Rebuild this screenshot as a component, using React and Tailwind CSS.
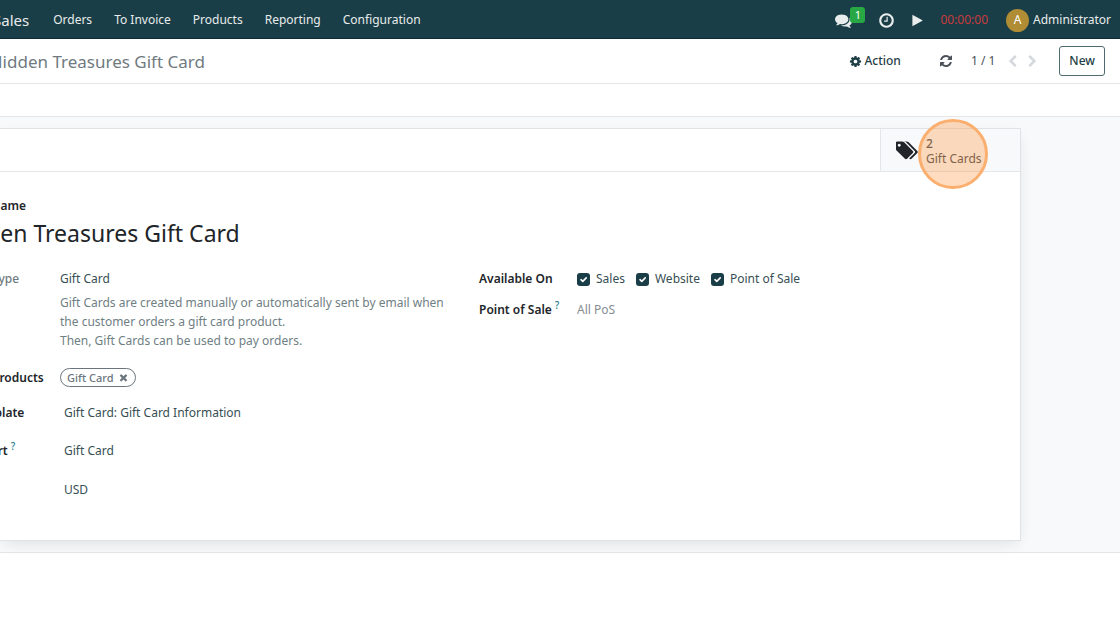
import React from 'react'

const icons = {
  comments:
    'M1408 768q0 139-94 257t-256.5 186.5-353.5 68.5q-86 0-176-16-124 88-278 128-36 9-86 16h-3q-11 0-20.5-8t-11.5-21q-1-3-1-6.5t.5-6.5 2-6l2.5-5 3.5-5.5 4-5 4.5-5 4-4.5q5-6 23-25t26-29.5 22.5-29 25-38.5 20.5-44q-124-72-195-177t-71-224q0-139 94-257t256.5-186.5 353.5-68.5 353.5 68.5 256.5 186.5 94 257zm384 256q0 120-71 224.5t-195 176.5q10 24 20.5 44t25 38.5 22.5 29 26 29.5 23 25q1 1 4 4.5t4.5 5 4 5 3.5 5.5l2.5 5 2 6 .5 6.5-1 6.5q-3 14-13 22t-22 7q-50-7-86-16-154-40-278-128-90 16-176 16-271 0-472-132 58 4 88 4 161 0 309-45t264-129q125-92 192-212t67-254q0-77-23-152 129 71 204 178t75 230z',
  clock:
    'M1024 544v448q0 14-9 23t-23 9h-320q-14 0-23-9t-9-23v-64q0-14 9-23t23-9h224v-352q0-14 9-23t23-9h64q14 0 23 9t9 23zm416 352q0-148-73-273t-198-198-273-73-273 73-198 198-73 273 73 273 198 198 273 73 273-73 198-198 73-273zm224 0q0 209-103 385.5t-279.5 279.5-385.5 103-385.5-103-279.5-279.5-103-385.5 103-385.5 279.5-279.5 385.5-103 385.5 103 279.5 279.5 103 385.5z',
  play: 'M1576 927l-1328 738q-23 13-39.5 3t-16.5-36v-1472q0-26 16.5-36t39.5 3l1328 738q23 13 23 31t-23 31z',
  cog:
    'M1152 896q0-106-75-181t-181-75-181 75-75 181 75 181 181 75 181-75 75-181zm512-109v222q0 12-8 23t-20 13l-185 28q-19 54-39 91 35 50 107 138 10 12 10 25t-9 23q-27 37-99 108t-94 71q-12 0-26-9l-138-108q-44 23-91 38-16 136-29 186-7 28-36 28h-222q-14 0-24.5-8.5t-11.5-21.5l-28-184q-49-16-90-37l-141 107q-10 9-25 9-14 0-25-11-126-114-165-168-7-10-7-23 0-12 8-23 15-21 51-66.5t54-70.5q-27-50-41-99l-183-27q-13-2-21-12.5t-8-23.5v-222q0-12 8-23t19-13l186-28q14-46 39-92-40-57-107-138-10-12-10-24 0-10 9-23 26-36 98.5-107.5t94.5-71.5q13 0 26 10l138 107q44-23 91-38 16-136 29-186 7-28 36-28h222q14 0 24.5 8.5t11.5 21.5l28 184q49 16 90 37l142-107q9-9 24-9 13 0 25 10 129 119 165 170 7 8 7 22 0 12-8 23-15 21-51 66.5t-54 70.5q26 50 41 98l183 28q13 2 21 12.5t8 23.5z',
  refresh:
    'M1639 1056q0 5-1 7-64 268-268 434.5t-478 166.5q-146 0-282.5-55t-243.5-157l-129 129q-19 19-45 19t-45-19-19-45v-448q0-26 19-45t45-19h448q26 0 45 19t19 45-19 45l-137 137q71 66 161 102t187 36q134 0 250-65t186-179q11-17 53-117 8-23 30-23h192q13 0 22.5 9.5t9.5 22.5zm25-800v448q0 26-19 45t-45 19h-448q-26 0-45-19t-19-45 19-45l138-138q-148-137-349-137-134 0-250 65t-186 179q-11 17-53 117-8 23-30 23h-199q-13 0-22.5-9.5t-9.5-22.5v-7q65-268 270-434.5t480-166.5q146 0 284 55.5t245 156.5l130-129q19-19 45-19t45 19 19 45z',
  left: 'M1427 301l-531 531 531 531q19 19 19 45t-19 45l-166 166q-19 19-45 19t-45-19l-742-742q-19-19-19-45t19-45l742-742q19-19 45-19t45 19l166 166q19 19 19 45t-19 45z',
  right: 'M1363 877l-742 742q-19 19-45 19t-45-19l-166-166q-19-19-19-45t19-45l531-531-531-531q-19-19-19-45t19-45l166-166q19-19 45-19t45 19l742 742q19 19 19 45t-19 45z',
  tags:
    'M384 448q0-53-37.5-90.5t-90.5-37.5-90.5 37.5-37.5 90.5 37.5 90.5 90.5 37.5 90.5-37.5 37.5-90.5zm1067 576q0 53-37 90l-491 492q-39 37-91 37-53 0-90-37l-715-716q-38-37-64.5-101t-26.5-117v-416q0-52 38-90t90-38h416q53 0 117 26.5t102 64.5l715 714q37 39 37 91zm384 0q0 53-37 90l-491 492q-39 37-91 37-36 0-59-14t-53-45l470-470q37-37 37-90 0-52-37-91l-715-714q-38-38-102-64.5t-117-26.5h224q53 0 117 26.5t102 64.5l715 714q37 39 37 91z',
  times:
    'M1490 1322q0 40-28 68l-136 136q-28 28-68 28t-68-28l-294-294-294 294q-28 28-68 28t-68-28l-136-136q-28-28-28-68t28-68l294-294-294-294q-28-28-28-68t28-68l136-136q28-28 68-28t68 28l294 294 294-294q28-28 68-28t68 28l136 136q28 28 28 68t-28 68l-294 294 294 294q28 28 28 68z',
}

function Icon({ name, className }) {
  return (
    <svg viewBox={name === 'tags' ? '0 0 1920 1792' : '0 0 1792 1792'} fill="currentColor" aria-hidden="true" className={className}>
      <path d={icons[name]} />
    </svg>
  )
}

function Navbar() {
  const links = ['Orders', 'To Invoice', 'Products', 'Reporting', 'Configuration']
  return (
    <header className="h-[39px] bg-[#1a3e47] border-b border-[#0d2b33] text-[#e8ecec] flex items-center justify-between pt-[2px] pr-[9px]">
      <nav className="flex items-center gap-[22px]">
        <a href="#sales" className="text-[15px] -ml-[7px] mr-[2px]">Sales</a>
        {links.map((link) => (
          <a key={link} href="#menu">{link}</a>
        ))}
      </nav>
      <div className="flex items-center">
        <button aria-label="Messages" className="relative mr-[26px]">
          <Icon name="comments" className="w-[17px] h-[17px]" />
          <span className="absolute -top-[5px] left-[15px] h-[16px] w-[15px] rounded-[3px] bg-[#28a745] text-white text-[11px] leading-4">1</span>
        </button>
        <button aria-label="Activities" className="mr-[16px]">
          <Icon name="clock" className="w-[17px] h-[17px]" />
        </button>
        <button aria-label="Start timer" className="mr-[16px]">
          <Icon name="play" className="w-[13px] h-[13px]" />
        </button>
        <span className="text-[#c83c3f] mr-[18px]">00:00:00</span>
        <button className="flex items-center gap-1">
          <span className="w-[23px] h-[23px] rounded-full bg-[#b08d35] text-white flex items-center justify-center">A</span>
          Administrator
        </button>
      </div>
    </header>
  )
}

function ControlPanel() {
  return (
    <div className="h-[45px] border-b border-[#e4e6e9] flex items-center justify-between pr-[15px]">
      <h2 className="text-[17px] text-[#6f7a80] pt-px -ml-[10px]">Hidden Treasures Gift Card</h2>
      <div className="flex items-center text-[#1f3f46]">
        <button className="flex items-center gap-[2px] font-medium mr-[38px]">
          <Icon name="cog" className="w-[13px] h-[13px]" />
          Action
        </button>
        <button aria-label="Refresh" className="mr-[18px] text-[#495057]">
          <Icon name="refresh" className="w-[14px] h-[14px]" />
        </button>
        <span className="mr-[11px] text-[#495057]">1 / 1</span>
        <button aria-label="Previous" className="mr-[7px] text-[#d5d8dc]" disabled>
          <Icon name="left" className="w-[13px] h-[13px]" />
        </button>
        <button aria-label="Next" className="mr-[20px] text-[#d5d8dc]" disabled>
          <Icon name="right" className="w-[13px] h-[13px]" />
        </button>
        <button className="h-[30px] px-[9px] border border-[#4f6b71] rounded-[3px] font-medium">New</button>
      </div>
    </div>
  )
}

function StatButton() {
  return (
    <button className="relative w-[140px] h-full bg-[#f8f9fb] border-l border-[#e4e6e9] flex items-center gap-[7px] pl-[15px] text-left text-[#495057]">
      <Icon name="tags" className="w-[23px] h-[21px] text-[#212529]" />
      <span className="leading-[15px] pt-[2px]">
        <span className="block font-medium">2</span>
        <span className="block">Gift Cards</span>
      </span>
      <span className="absolute left-[37px] -top-[10px] w-[70px] h-[70px] rounded-full border-3 border-[#fbaf6f] bg-[#ff8a2b]/30" />
    </button>
  )
}

function Check({ label }) {
  return (
    <label className="flex items-center gap-[6px]">
      <span className="grid">
        <input type="checkbox" defaultChecked className="col-start-1 row-start-1 appearance-none w-[13px] h-[13px] rounded-[3px] bg-[#1a3e47]" />
        <svg viewBox="0 0 13 13" fill="none" stroke="white" strokeWidth="1.6" strokeLinecap="round" strokeLinejoin="round" className="col-start-1 row-start-1 w-[13px] h-[13px] pointer-events-none">
          <path d="M4 6.7L5.8 8.4L9.2 4.9" />
        </svg>
      </span>
      {label}
    </label>
  )
}

function Help() {
  return <sup className="text-[10px] font-medium text-[#1f7f8f] ml-[3px]">?</sup>
}

const labelStyle = 'font-semibold text-[#212529] whitespace-nowrap'

function ProgramForm() {
  return (
    <div className="grid grid-cols-[479px_1fr]">
      <div>
        <div className="flex">
          <span className="w-[60px] text-[#6f7a80] font-medium"><span className="-ml-2">Type</span></span>
          <div className="flex-1">
            <p>Gift Card</p>
            <p className="mt-1 leading-[19px] text-[#6f8084]">
              Gift Cards are created manually or automatically sent by email when<br />
              the customer orders a gift card product.<br />
              Then, Gift Cards can be used to pay orders.
            </p>
          </div>
        </div>
        <div className="flex mt-[18px]">
          <span className={`w-[60px] ${labelStyle}`}><span className="-ml-2">Products</span></span>
          <span className="flex items-center gap-1 h-[19px] px-[6px] rounded-full border border-[#6c757d] text-[11px] font-medium text-[#6c757d]">
            Gift Card
            <button aria-label="Remove Gift Card"><Icon name="times" className="w-[11px] h-[11px]" /></button>
          </span>
        </div>
        <div className="flex mt-[15px]">
          <span className={`w-[64px] ${labelStyle}`}><span className="-ml-[30px]">Template</span></span>
          <span>Gift Card: Gift Card Information</span>
        </div>
        <div className="flex mt-[18px]">
          <span className={`w-[64px] ${labelStyle}`}><span className="-ml-8">Report</span><Help /></span>
          <span>Gift Card</span>
        </div>
        <div className="flex mt-[19px] pl-[64px]">USD</div>
      </div>
      <div>
        <div className="flex">
          <span className={`w-[98px] ${labelStyle}`}>Available On</span>
          <div className="flex gap-[11px]">
            <Check label="Sales" />
            <Check label="Website" />
            <Check label="Point of Sale" />
          </div>
        </div>
        <div className="flex mt-[11px]">
          <label htmlFor="pos" className={`w-[98px] ${labelStyle}`}>Point of Sale<Help /></label>
          <input id="pos" placeholder="All PoS" className="w-40 placeholder:text-[#858c92] outline-none" />
        </div>
      </div>
    </div>
  )
}

export default function App() {
  return (
    <div className="min-h-screen overflow-x-hidden bg-white font-['Noto_Sans',sans-serif] text-[12px] leading-5 text-[#374f54]">
      <Navbar />
      <ControlPanel />
      <div className="h-[33px] border-b border-[#e4e6e9]" />
      <main className="bg-[#f8f9fb] border-b border-[#e4e6e9] pt-[11px] pb-[11px] pr-[99px]">
        <section className="bg-white border border-l-0 border-[#e0e2e5] shadow-[0_5px_15px_-4px_rgba(0,0,0,0.12)] pb-10">
          <div className="h-[43px] border-b border-[#e4e6e9] flex justify-end">
            <StatButton />
          </div>
          <div className="pt-6">
            <p className={labelStyle}><span className="-ml-[9px]">Name</span></p>
            <h1 className="text-[23px] leading-[34px] text-[#212529] -ml-[51px] mb-[19px]">Hidden Treasures Gift Card</h1>
            <ProgramForm />
          </div>
        </section>
      </main>
    </div>
  )
}
